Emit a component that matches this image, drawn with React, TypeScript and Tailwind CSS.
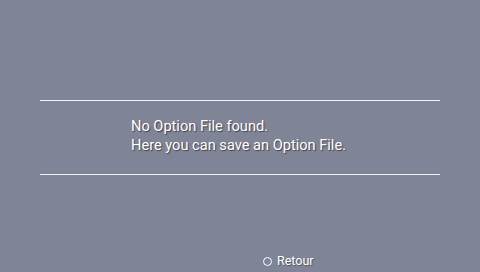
export default function App() {
  return (
    <div className="w-[480px] h-[272px] bg-[#7f8597] flex flex-col text-white font-['Roboto','Liberation_Sans',sans-serif] overflow-hidden">
      <div className="mt-[100px] mx-[40px] h-[75px] border-t border-b border-[#f2f2f2] pl-[91px] pt-[16px]">
        <p className="text-[14.6px] leading-[19px] [text-shadow:1px_1px_1px_rgba(0,0,0,0.5)]">
          No Option File found.
          <br />
          Here you can save an Option File.
        </p>
      </div>
      <div className="mt-auto mb-[3px] pl-[263px] flex items-center gap-[5px] text-[12.5px] leading-[16px] [text-shadow:1px_1px_1px_rgba(0,0,0,0.35)]">
        <span className="w-[9px] h-[9px] rounded-full border-[1.5px] border-white" />
        <span>Retour</span>
      </div>
    </div>
  );
}
